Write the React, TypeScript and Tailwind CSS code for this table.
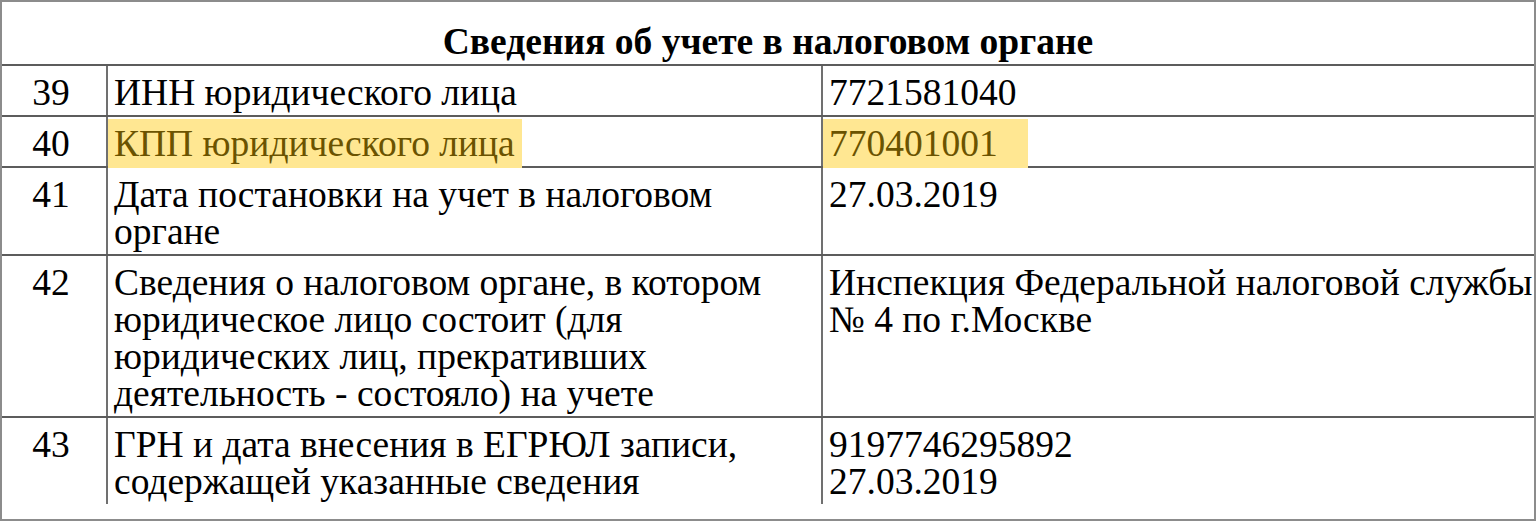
const rows = [
  { n: "39", label: ["ИНН юридического лица"], value: ["7721581040"] },
  { n: "40", label: ["КПП юридического лица"], value: ["770401001"], mark: true },
  { n: "41", label: ["Дата постановки на учет в налоговом", "органе"], value: ["27.03.2019"] },
  {
    n: "42",
    label: [
      "Сведения о налоговом органе, в котором",
      "юридическое лицо состоит (для",
      "юридических лиц, прекративших",
      "деятельность - состояло) на учете",
    ],
    value: ["Инспекция Федеральной налоговой службы", "№ 4 по г.Москве"],
  },
  {
    n: "43",
    label: ["ГРН и дата внесения в ЕГРЮЛ записи,", "содержащей указанные сведения"],
    value: ["9197746295892", "27.03.2019"],
  },
];

function Lines({ lines }: { lines: string[] }) {
  return (
    <>
      {lines.map((l) => (
        <div key={l} className="whitespace-nowrap">
          {l}
        </div>
      ))}
    </>
  );
}

export default function App() {
  return (
    <div className="h-[521px] w-[1536px] overflow-hidden border-2 border-[#8c8c8c] bg-white font-[Liberation_Serif] text-[37.5px] leading-[37px] text-black">
      {/* Header */}
      <div className="h-[64px] border-b-2 border-[#5c5c5c] pt-[21px] text-center font-bold">
        Сведения об учете в налоговом органе
      </div>

      {/* Rows */}
      {rows.map((r, i) => (
        <div
          key={r.n}
          className={`grid grid-cols-[104px_715px_1fr] ${
            i < rows.length - 1 ? "border-b-2 border-[#5c5c5c]" : ""
          }`}
        >
          <div className="pt-[8px] pb-[4px] pr-[6px] text-center">{r.n}</div>
          <div className="border-l-2 border-[#707070] pt-[8px] pb-[4px] pl-[6px]">
            {r.mark ? (
              <span className="-ml-[6px] bg-[#ffe792] py-[4px] pr-[7px] pl-[6px] text-[#6b5300]">
                {r.label[0]}
              </span>
            ) : (
              <Lines lines={r.label} />
            )}
          </div>
          <div className="border-l-2 border-[#707070] pt-[8px] pb-[4px] pl-[6px]">
            {r.mark ? (
              <span className="-ml-[6px] bg-[#ffe792] py-[4px] pr-[30px] pl-[6px] text-[#6b5300]">
                {r.value[0]}
              </span>
            ) : (
              <Lines lines={r.value} />
            )}
          </div>
        </div>
      ))}
    </div>
  );
}
